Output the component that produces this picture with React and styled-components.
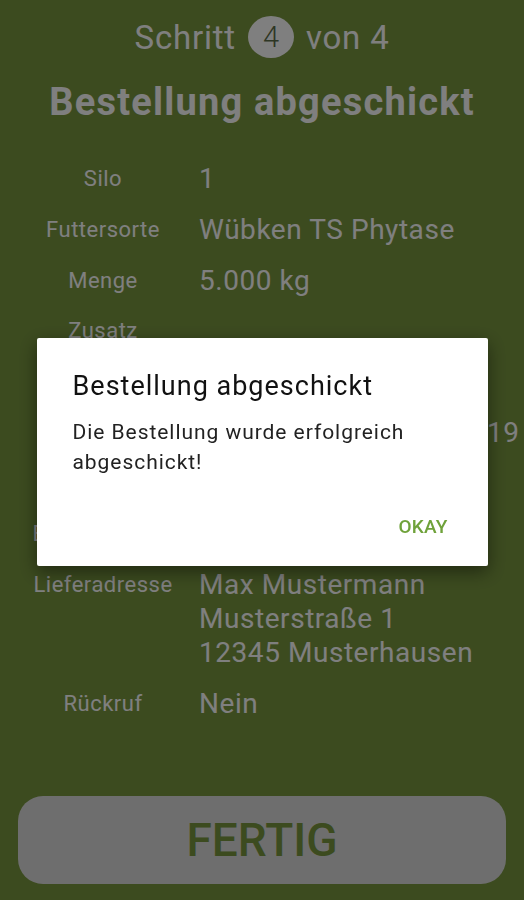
import React from 'react';
import styled, { createGlobalStyle } from 'styled-components';

const GlobalStyle = createGlobalStyle`
  html, body {
    margin: 0;
    padding: 0;
    height: 100%;
  }
  body {
    font-family: Roboto, 'Noto Sans', sans-serif;
    background: #78963f;
  }
`;

const GREEN = '#78963f';

const Screen = styled.div`
  min-height: 100vh;
  display: flex;
  flex-direction: column;
  background: ${GREEN};
  color: #ffffff;
  box-sizing: border-box;
  padding: 14px 18px 16px;
`;

const StepLine = styled.div`
  display: flex;
  align-items: center;
  justify-content: center;
  gap: 12px;
  font-size: 33px;
  letter-spacing: 0.8px;
  height: 46px;
`;

const StepBadge = styled.span`
  width: 46px;
  height: 42px;
  border-radius: 50%;
  background: #ffffff;
  color: #5c6d48;
  font-weight: 300;
  font-size: 29px;
  letter-spacing: 0;
  display: flex;
  align-items: center;
  justify-content: center;
`;

const Title = styled.h1`
  margin: 19px 0 0;
  text-align: center;
  font-size: 38px;
  letter-spacing: 1.2px;
  font-weight: 700;
  line-height: 46px;
`;

const Summary = styled.dl`
  margin: 37px 0 0;
  display: grid;
  grid-template-columns: 160px 1fr;
  column-gap: 21px;
  row-gap: 16.75px;
`;

const Label = styled.dt`
  text-align: center;
  font-size: 22px;
  letter-spacing: 0.5px;
  line-height: 34px;
  margin-left: 10px;
  white-space: nowrap;
`;

const Value = styled.dd`
  margin: 0;
  font-size: 28px;
  letter-spacing: 0.55px;
  line-height: 34px;
  white-space: pre;
  min-height: 34px;
`;

const FinishButton = styled.button`
  margin-top: auto;
  height: 88px;
  border: none;
  border-radius: 25px;
  background: #dcdcdc;
  color: ${GREEN};
  font-family: Roboto, sans-serif;
  font-size: 46px;
  font-weight: 500;
`;

const Overlay = styled.div`
  position: fixed;
  inset: 0;
  padding-top: 4px;
  background: rgba(0, 0, 0, 0.5);
  display: flex;
  align-items: center;
  justify-content: center;
`;

const Dialog = styled.div`
  width: 451px;
  height: 228px;
  box-sizing: border-box;
  background: #ffffff;
  border-radius: 2px;
  box-shadow: 0 6px 18px rgba(0, 0, 0, 0.45);
  padding: 32px 36px 0;
  display: flex;
  flex-direction: column;
`;

const DialogTitle = styled.h2`
  margin: 0;
  font-size: 27px;
  letter-spacing: 1px;
  font-weight: 400;
  color: #111111;
  line-height: 32px;
`;

const DialogText = styled.p`
  margin: 15px 0 0;
  font-size: 21px;
  letter-spacing: 0.95px;
  line-height: 30px;
  color: #222222;
`;

const DialogActions = styled.div`
  margin-top: auto;
  display: flex;
  justify-content: flex-end;
  padding: 0 4px 28px 0;
`;

const DialogButton = styled.button`
  border: none;
  background: transparent;
  padding: 0;
  font-family: Roboto, sans-serif;
  font-size: 19px;
  font-weight: 500;
  color: #6fa23a;
  letter-spacing: 0.2px;
`;

const rows = [
  { label: 'Silo', value: '1' },
  { label: 'Futtersorte', value: 'Wübken TS Phytase' },
  { label: 'Menge', value: '5.000 kg' },
  { label: 'Zusatz', value: '' },
  { label: 'Lieferung', value: 'Lose' },
  { label: 'Lieferdatum', value: 'Mittwoch, 13. März 2019' },
  { label: 'Uhrzeit', value: 'vormittags' },
  { label: 'Bemerkungen', value: '' },
  { label: 'Lieferadresse', value: 'Max Mustermann\nMusterstraße 1\n12345 Musterhausen' },
  { label: 'Rückruf', value: 'Nein' },
];

const App = () => {
  return (
    <>
      <GlobalStyle />
      <Screen>
        <StepLine>
          <span>Schritt</span>
          <StepBadge>4</StepBadge>
          <span>von 4</span>
        </StepLine>
        <Title>Bestellung abgeschickt</Title>
        <Summary>
          {rows.map((row) => (
            <React.Fragment key={row.label}>
              <Label>{row.label}</Label>
              <Value>{row.value}</Value>
            </React.Fragment>
          ))}
        </Summary>
        <FinishButton>FERTIG</FinishButton>
      </Screen>
      <Overlay>
        <Dialog>
          <DialogTitle>Bestellung abgeschickt</DialogTitle>
          <DialogText>
            Die Bestellung wurde erfolgreich
            <br />
            abgeschickt!
          </DialogText>
          <DialogActions>
            <DialogButton>OKAY</DialogButton>
          </DialogActions>
        </Dialog>
      </Overlay>
    </>
  );
};

export default App;
